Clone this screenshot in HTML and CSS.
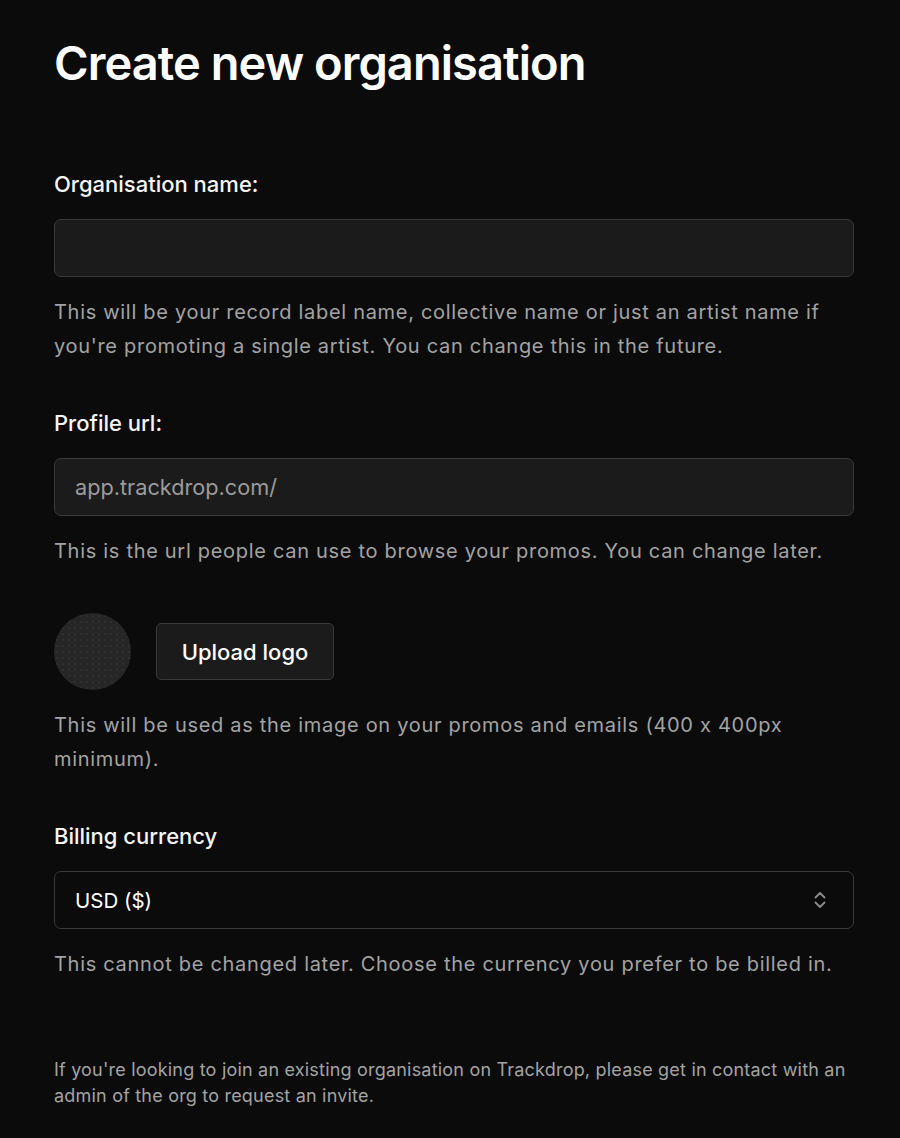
FILE: index.html
```html
<!DOCTYPE html>
<html lang="en">
<head>
<meta charset="utf-8">
<title>Create new organisation</title>
<link rel="stylesheet" href="styles.css">
</head>
<body>
<main class="page">
  <h1 class="title">Create new organisation</h1>

  <section class="field first">
    <label class="label">Organisation name:</label>
    <div class="input"></div>
    <p class="help">This will be your record label name, collective name or just an artist name if you're promoting a single artist. You can change this in the future.</p>
  </section>

  <section class="field">
    <label class="label">Profile url:</label>
    <div class="input"><span class="prefix">app.trackdrop.com/</span></div>
    <p class="help">This is the url people can use to browse your promos. You can change later.</p>
  </section>

  <section class="field logo-field">
    <div class="logo-row">
      <div class="avatar"></div>
      <button class="btn">Upload logo</button>
    </div>
    <p class="help">This will be used as the image on your promos and emails (400 x 400px minimum).</p>
  </section>

  <section class="field">
    <label class="label">Billing currency</label>
    <div class="select">
      <span class="select-value">USD ($)</span>
      <svg class="chev" width="14" height="20" viewBox="0 0 14 20" fill="none" stroke="#8c8c8c" stroke-width="1.8" stroke-linecap="round" stroke-linejoin="round">
        <path d="M2.5 7.5 L7 3 L11.5 7.5"/>
        <path d="M2.5 12.5 L7 17 L11.5 12.5"/>
      </svg>
    </div>
    <p class="help">This cannot be changed later. Choose the currency you prefer to be billed in.</p>
  </section>

  <p class="footnote">If you're looking to join an existing organisation on Trackdrop, please get in contact with an admin of the org to request an invite.</p>
</main>
</body>
</html>
```

FILE: styles.css
```css
* { box-sizing: border-box; }

html, body {
  margin: 0;
  padding: 0;
  background: #0b0b0b;
}

body {
  font-family: Inter, "Noto Sans", "Liberation Sans", sans-serif;
  font-feature-settings: "calt" 0;
  color: #ffffff;
}

.page {
  width: 900px;
  padding: 34px 46px 0 54px;
}

.title {
  margin: 0;
  font-size: 47px;
  line-height: 58px;
  font-weight: 600;
  letter-spacing: -0.02em;
  color: #ffffff;
}

.field {
  margin-top: 46px;
  display: flex;
  flex-direction: column;
}

.field.first {
  margin-top: 78px;
}

.logo-field {
  margin-top: 45px;
}

.label {
  font-size: 22px;
  line-height: 28px;
  font-weight: 500;
  color: #f5f5f5;
  margin-bottom: 21px;
}

.input {
  height: 58px;
  background: #1b1b1b;
  border: 1px solid #393939;
  border-radius: 7px;
  display: flex;
  align-items: center;
  padding: 0 20px;
}

.prefix {
  font-size: 21.7px;
  color: #9c9c9c;
}

.help {
  margin: 18px 0 0;
  font-size: 20px;
  line-height: 34px;
  letter-spacing: 0.7px;
  color: #a3a3a3;
}

.logo-row {
  display: flex;
  align-items: center;
  gap: 25px;
}

.avatar {
  width: 77px;
  height: 77px;
  border-radius: 50%;
  background-color: #262626;
  background-image: radial-gradient(circle, #2f2f2f 0.7px, transparent 1.1px);
  background-size: 6px 6px;
}

.btn {
  height: 57px;
  width: 178px;
  padding: 0;
  background: #1b1b1b;
  border: 1px solid #393939;
  border-radius: 5px;
  color: #ffffff;
  font-family: inherit;
  font-feature-settings: "calt" 0;
  font-size: 22px;
  font-weight: 450;
}

.select {
  height: 58px;
  background: #0b0b0b;
  border: 1px solid #393939;
  border-radius: 7px;
  display: flex;
  align-items: center;
  justify-content: space-between;
  padding: 0 26px 0 20px;
}

.select-value {
  font-size: 20.5px;
  color: #ffffff;
}

.chev {
  display: block;
}

.footnote {
  margin: 76px 0 0;
  font-size: 18px;
  line-height: 26px;
  letter-spacing: 0.2px;
  color: #a3a3a3;
}
```
